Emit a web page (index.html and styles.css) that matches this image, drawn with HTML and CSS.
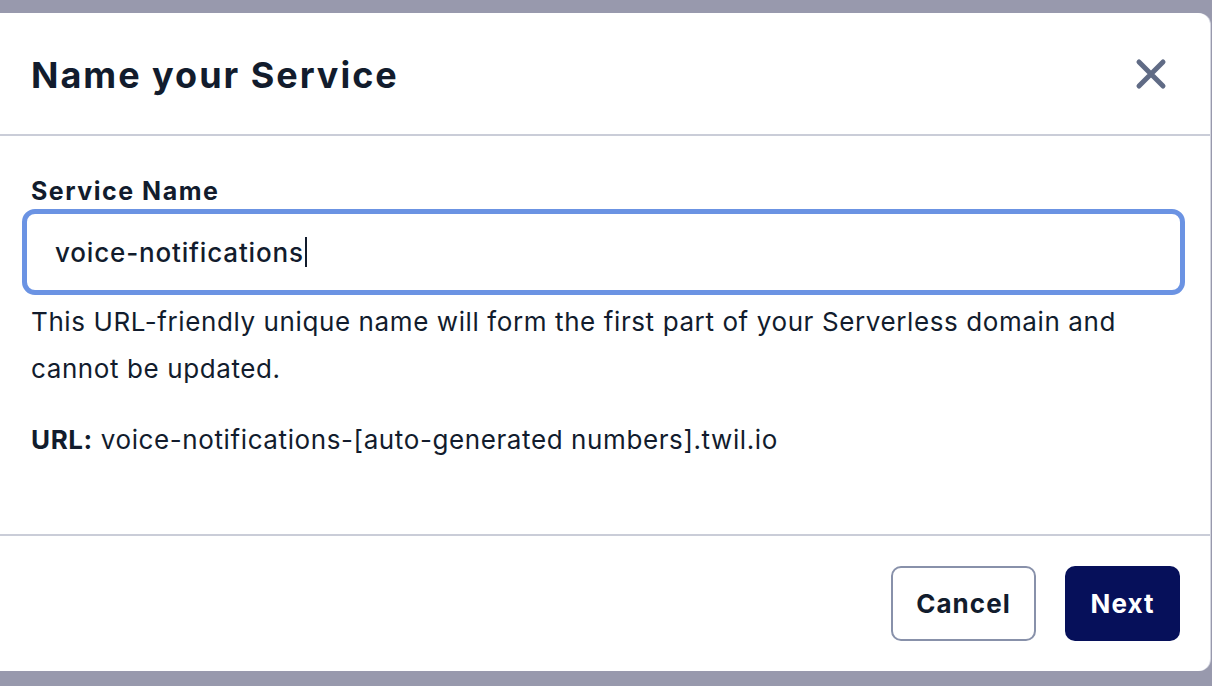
FILE: index.html
```html
<!DOCTYPE html>
<html>
<head>
<meta charset="utf-8">
<link rel="stylesheet" href="styles.css">
</head>
<body>
<div class="modal">
  <header class="modal-header">
    <h1 class="modal-title">Name your Service</h1>
    <button class="close-btn" aria-label="Close">
      <svg width="34" height="34" viewBox="0 0 34 34"><path d="M5 5 L29 29 M29 5 L5 29" stroke="#606b85" stroke-width="5" stroke-linecap="round" fill="none"/></svg>
    </button>
  </header>
  <section class="modal-body">
    <label class="field-label">Service Name</label>
    <div class="input-box"><span class="input-value">voice-notifications</span><span class="caret"></span></div>
    <p class="help">This URL-friendly unique name will form the first part of your Serverless domain and cannot be updated.</p>
    <p class="url"><strong>URL:</strong> voice-notifications-[auto-generated numbers].twil.io</p>
  </section>
  <footer class="modal-footer">
    <button class="btn btn-secondary">Cancel</button>
    <button class="btn btn-primary">Next</button>
  </footer>
</div>
</body>
</html>
```
FILE: styles.css
```css
html, body {
  margin: 0;
  padding: 0;
  height: 100%;
}
body {
  background: #9899ad;
  font-family: Inter, "Noto Sans", sans-serif;
  color: #121c2d;
  overflow: hidden;
  padding-top: 13px;
  box-sizing: border-box;
  letter-spacing: 0.045em;
}
.modal {
  margin-left: -4px;
  width: 1214px;
  height: 658px;
  background: #fff;
  border-radius: 0 12px 12px 0;
  box-shadow: 1px 0 0 #d4d6e0;
  display: flex;
  flex-direction: column;
}
.modal-header {
  height: 121px;
  border-bottom: 2px solid #cacdd8;
  display: flex;
  align-items: center;
  justify-content: space-between;
  padding: 0 42px 0 35px;
  box-sizing: content-box;
}
.modal-title {
  margin: 0;
  font-size: 36px;
  font-weight: 700;
  letter-spacing: 0.055em;
  padding-top: 2px;
}
.close-btn {
  background: none;
  border: 0;
  padding: 0;
  width: 34px;
  height: 34px;
  display: flex;
  cursor: pointer;
}
.modal-body {
  height: 400px;
  border-bottom: 2px solid #cacdd8;
  padding: 40px 0 0 35px;
  box-sizing: border-box;
}
.field-label {
  display: block;
  font-size: 25px;
  font-weight: 700;
  line-height: 30px;
  margin-bottom: 3px;
  letter-spacing: 0.06em;
}
.input-box {
  margin-left: -9px;
  width: 1163px;
  height: 86px;
  box-sizing: border-box;
  border: 5px solid #6b93e3;
  border-radius: 13px;
  display: flex;
  align-items: center;
  padding-left: 28px;
}
.input-value {
  font-size: 26px;
  font-weight: 500;
  letter-spacing: 0.83px;
}
.caret {
  display: inline-block;
  width: 2px;
  height: 30px;
  background: #121c2d;
  margin-left: 1px;
}
.help {
  margin: 3px 0 0;
  font-size: 26px;
  line-height: 47px;
  letter-spacing: 0.6px;
  width: 1125px;
}
.url {
  margin: 24px 0 0;
  font-size: 26px;
  line-height: 47px;
  letter-spacing: 0.6px;
}
.url strong { font-weight: 700; }
.modal-footer {
  flex: 1;
  display: flex;
  justify-content: flex-end;
  align-items: flex-start;
  gap: 29px;
  padding: 30px 30px 0 0;
}
.btn {
  height: 75px;
  border-radius: 10px;
  font-family: Inter, "Noto Sans", sans-serif;
  font-size: 26px;
  font-weight: 700;
  letter-spacing: 0.04em;
  padding: 0;
  cursor: pointer;
}
.btn-secondary {
  width: 145px;
  background: #fff;
  border: 2px solid #8891aa;
  color: #121c2d;
}
.btn-primary {
  width: 115px;
  background: #06105a;
  border: 0;
  color: #fff;
}
```
